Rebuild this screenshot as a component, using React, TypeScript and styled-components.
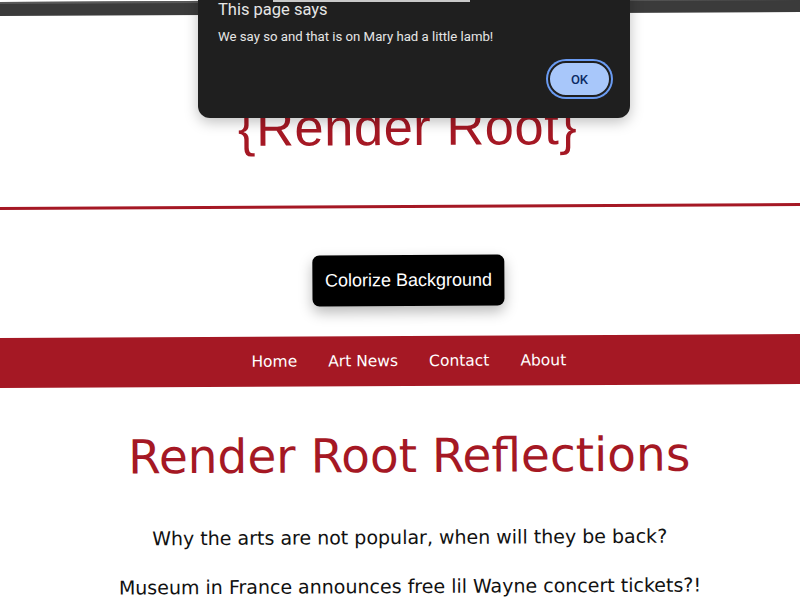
import React from "react";
import styled, { createGlobalStyle } from "styled-components";

const Global = createGlobalStyle`
  html, body { margin: 0; padding: 0; background: #ffffff; overflow: hidden; }
  body { width: 800px; height: 600px; }
`;

const RED = "#a51824";
const POP = `"DejaVu Sans", "Noto Sans", sans-serif`;

const Stage = styled.div`
  position: relative;
  width: 800px;
  height: 600px;
  overflow: hidden;
  background: #ffffff;
`;

const Page = styled.div`
  width: 820px;
  margin-left: -2px;
  transform: rotate(-0.29deg);
  transform-origin: 410px 200px;
  display: flex;
  flex-direction: column;
`;

const ChromeBar = styled.div`
  height: 12px;
  background: #3b3b3b;
  border-top: 2px solid #5a5a5a;
`;

const Header = styled.header`
  height: 194px;
  display: flex;
  align-items: flex-end;
  justify-content: center;
  padding-left: 0px;
  box-sizing: border-box;
  border-bottom: 3px solid ${RED};
`;

const Logo = styled.h1`
  margin: 0 0 50px 0;
  font-family: "Liberation Sans", "DejaVu Sans", sans-serif;
  font-weight: 400;
  font-size: 52.5px;
  line-height: 56px;
  color: ${RED};
  letter-spacing: 0.5px;
`;

const ButtonRow = styled.div`
  height: 128px;
  display: flex;
  align-items: center;
  justify-content: center;
  padding-top: 16px;
  box-sizing: border-box;
`;

const ColorButton = styled.button`
  width: 192px;
  height: 51px;
  background: #000000;
  color: #ffffff;
  border: none;
  border-radius: 7px;
  font-family: "Liberation Sans", Arial, sans-serif;
  font-size: 18px;
  box-shadow: 0 6px 14px rgba(0, 0, 0, 0.28);
  cursor: pointer;
`;

const Nav = styled.nav`
  height: 50px;
  background: ${RED};
  display: flex;
  align-items: center;
  justify-content: center;
  gap: 31px;
`;

const NavLink = styled.a`
  font-family: ${POP};
  font-size: 15.5px;
  color: #ffffff;
  text-decoration: none;
`;

const Main = styled.main`
  display: flex;
  flex-direction: column;
  align-items: center;
`;

const Title = styled.h2`
  margin: 42px 0 0 0;
  font-family: ${POP};
  font-weight: 400;
  font-size: 47px;
  line-height: 56px;
  color: ${RED};
`;

const Headline = styled.p<{ $top: number }>`
  margin: ${(p) => p.$top}px 0 0 0;
  font-family: ${POP};
  font-weight: 400;
  font-size: 19px;
  line-height: 26px;
  color: #111111;
`;

const Dialog = styled.div`
  position: absolute;
  left: 198px;
  top: -20px;
  width: 432px;
  box-sizing: border-box;
  padding: 20px 17px 19px 20px;
  background: #1f1f1f;
  border-radius: 12px;
  box-shadow: 0 4px 14px rgba(0, 0, 0, 0.25);
  display: flex;
  flex-direction: column;
  font-family: Roboto, "Noto Sans", sans-serif;
  &::before {
    content: "";
    position: absolute;
    left: 75px;
    top: 20px;
    width: 197px;
    height: 2px;
    background: #c9c9c9;
  }
`;

const DialogTitle = styled.div`
  font-size: 16.5px;
  line-height: 20px;
  color: #e6e6e6;
`;

const DialogMessage = styled.div`
  margin-top: 9px;
  font-size: 13.2px;
  line-height: 16px;
  color: #e6e6e6;
`;

const DialogActions = styled.div`
  margin-top: 14px;
  display: flex;
  justify-content: flex-end;
`;

const OkButton = styled.button`
  width: 63px;
  height: 36px;
  margin: 2px;
  box-sizing: border-box;
  border-radius: 18px;
  border: 2px solid #1f1f1f;
  box-shadow: 0 0 0 2px #6a9bf2;
  background: #a8c7fa;
  color: #0b2a63;
  font-family: Roboto, "Noto Sans", sans-serif;
  font-weight: 500;
  font-size: 13px;
`;

export default function App() {
  return (
    <Stage>
      <Global />
      <Page>
        <ChromeBar />
        <Header>
          <Logo>{"{Render Root}"}</Logo>
        </Header>
        <ButtonRow>
          <ColorButton>Colorize Background</ColorButton>
        </ButtonRow>
        <Nav>
          <NavLink href="#">Home</NavLink>
          <NavLink href="#">Art News</NavLink>
          <NavLink href="#">Contact</NavLink>
          <NavLink href="#">About</NavLink>
        </Nav>
        <Main>
          <Title>Render Root Reflections</Title>
          <Headline $top={40}>Why the arts are not popular, when will they be back?</Headline>
          <Headline $top={23}>Museum in France announces free lil Wayne concert tickets?!</Headline>
        </Main>
      </Page>
      <Dialog>
        <DialogTitle>This page says</DialogTitle>
        <DialogMessage>We say so and that is on Mary had a little lamb!</DialogMessage>
        <DialogActions>
          <OkButton>OK</OkButton>
        </DialogActions>
      </Dialog>
    </Stage>
  );
}
